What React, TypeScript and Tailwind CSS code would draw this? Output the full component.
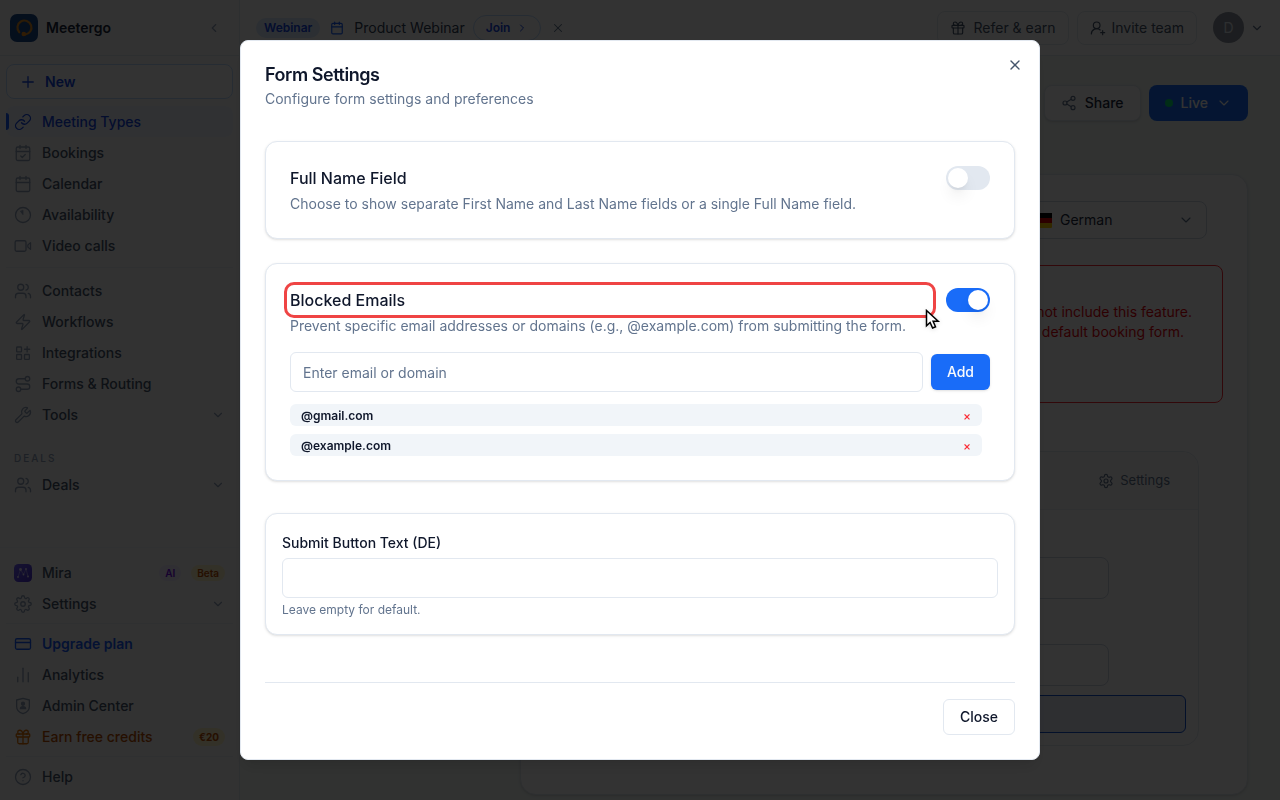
import type { ComponentType, ReactNode } from "react";
import { useState } from "react";
import {
  Calendar,
  CalendarCheck,
  ChartNoAxesColumn,
  ChevronDown,
  ChevronLeft,
  ChevronRight,
  CircleQuestionMark,
  CreditCard,
  Gift,
  Link,
  Plus,
  Route,
  Share2,
  UserRoundPlus,
  Users,
  Wrench,
  X,
  Zap,
} from "lucide-react";
import { FiSettings } from "react-icons/fi";

type IconProps = { className?: string; strokeWidth?: number };

function Svg({ className, strokeWidth = 1.75, children }: IconProps & { children: ReactNode }) {
  return (
    <svg
      viewBox="0 0 24 24"
      fill="none"
      stroke="currentColor"
      strokeWidth={strokeWidth}
      strokeLinecap="round"
      strokeLinejoin="round"
      className={className}
      aria-hidden="true"
    >
      {children}
    </svg>
  );
}

const ClockIcon = (p: IconProps) => (
  <Svg {...p}>
    <circle cx="12" cy="12" r="10" />
    <path d="M12 6v5.5L8.8 7.4z" fill="currentColor" strokeWidth={1} />
  </Svg>
);

const VideoIcon = (p: IconProps) => (
  <Svg {...p}>
    <rect x="1.5" y="5" width="14.5" height="14" rx="2" />
    <path d="M18.5 10.5l3.5-3v9l-3.5-3z" />
  </Svg>
);

const AppsIcon = (p: IconProps) => (
  <Svg {...p}>
    <rect x="3.5" y="4" width="6.500" height="6.500" rx="1" />
    <rect x="3.5" y="14" width="6.500" height="6.500" rx="1" />
    <rect x="14" y="14" width="6.500" height="6.500" rx="1" />
    <path d="M17.500 3.500v7M14 7h7" />
  </Svg>
);

const ShieldUserIcon = (p: IconProps) => (
  <Svg {...p}>
    <path d="M12 1.8 20.5 4v8.5c0 5-4 8.200-8.500 9.700-4.500-1.500-8.500-4.700-8.500-9.700V4z" />
    <circle cx="12" cy="9" r="2" fill="currentColor" />
    <path d="M8.500 15.500c0-3.600 7-3.600 7 0z" fill="currentColor" />
  </Svg>
);

const CogIcon = (p: IconProps) => (
  <Svg {...p}>
    <path d="M12.22 2h-.44a2 2 0 0 0-2 2v.18a2 2 0 0 1-1 1.73l-.43.25a2 2 0 0 1-2 0l-.15-.08a2 2 0 0 0-2.73.73l-.22.38a2 2 0 0 0 .73 2.73l.15.1a2 2 0 0 1 1 1.72v.51a2 2 0 0 1-1 1.74l-.15.09a2 2 0 0 0-.73 2.73l.22.38a2 2 0 0 0 2.73.73l.15-.08a2 2 0 0 1 2 0l.43.25a2 2 0 0 1 1 1.73V20a2 2 0 0 0 2 2h.44a2 2 0 0 0 2-2v-.18a2 2 0 0 1 1-1.73l.43-.25a2 2 0 0 1 2 0l.15.08a2 2 0 0 0 2.730-.73l.22-.39a2 2 0 0 0-.73-2.73l-.15-.08a2 2 0 0 1-1-1.74v-.5a2 2 0 0 1 1-1.74l.15-.09a2 2 0 0 0 .73-2.73l-.22-.38a2 2 0 0 0-2.73-.73l-.15.08a2 2 0 0 1-2 0l-.43-.25a2 2 0 0 1-1-1.73V4a2 2 0 0 0-2-2z" />
    <circle cx="12" cy="12" r="3" />
  </Svg>
);

const MiraIcon = ({ className }: IconProps) => (
  <svg viewBox="0 0 18 18" className={className} aria-hidden="true">
    <defs>
      <linearGradient id="mira" x1="0" y1="0" x2="1" y2="1">
        <stop offset="0" stopColor="#6d5cf6" />
        <stop offset="1" stopColor="#4a2fd0" />
      </linearGradient>
    </defs>
    <rect width="18" height="18" rx="4.500" fill="url(#mira)" />
    <path d="M4 13 6.500 5.500 9.500 10.500 12 5l2 7.500" fill="none" stroke="#a59cf5" strokeWidth="0.800" />
    <g fill="#e5e1ff">
      <circle cx="4" cy="13" r="0.900" />
      <circle cx="6.500" cy="5.500" r="1.400" />
      <circle cx="9.500" cy="10.500" r="0.900" />
      <circle cx="12" cy="5" r="0.900" />
      <circle cx="14" cy="12.500" r="0.900" />
    </g>
  </svg>
);

function Logo() {
  return (
    <svg viewBox="0 0 28 28" className="size-7 shrink-0" aria-hidden="true">
      <rect width="28" height="28" rx="7" fill="#1d4a8a" />
      <path
        d="M9.300 18.300a7 7 0 1 1 6 2.200"
        fill="none"
        stroke="#d98a24"
        strokeWidth="2.200"
        strokeLinecap="round"
      />
      <circle cx="13.800" cy="20" r="2.300" fill="#f08a18" />
    </svg>
  );
}

type Item = {
  label: string;
  icon: ComponentType<IconProps>;
  tone?: "active" | "upgrade" | "earn";
  expandable?: boolean;
  badges?: ReactNode;
};

const scheduling: Item[] = [
  { label: "Meeting Types", icon: Link, tone: "active" },
  { label: "Bookings", icon: CalendarCheck },
  { label: "Calendar", icon: Calendar },
  { label: "Availability", icon: ClockIcon },
  { label: "Video calls", icon: VideoIcon },
];

const workspace: Item[] = [
  { label: "Contacts", icon: Users },
  { label: "Workflows", icon: Zap },
  { label: "Integrations", icon: AppsIcon },
  { label: "Forms & Routing", icon: Route },
  { label: "Tools", icon: Wrench, expandable: true },
];

const account: Item[] = [
  { label: "Upgrade plan", icon: CreditCard, tone: "upgrade" },
  { label: "Analytics", icon: ChartNoAxesColumn },
  { label: "Admin Center", icon: ShieldUserIcon },
  {
    label: "Earn free credits",
    icon: Gift,
    tone: "earn",
    badges: (
      <span className="rounded-full bg-amber-100 px-1.5 text-[10px] leading-[18px] font-bold text-amber-700">
        €20
      </span>
    ),
  },
];

const rowTone = {
  active: "bg-blue-50 text-blue-700 font-medium",
  upgrade: "text-blue-600 font-semibold",
  earn: "text-amber-700 font-medium",
  plain: "text-slate-600 font-medium",
};

const iconTone = {
  active: "size-[18px] shrink-0 text-blue-700",
  upgrade: "size-[18px] shrink-0 text-blue-600",
  earn: "size-[18px] shrink-0 text-amber-600",
  plain: "size-[18px] shrink-0 text-slate-400",
};

function NavRow({ item }: { item: Item }) {
  const tone = item.tone ?? "plain";
  const Icon = item.icon;
  return (
    <a
      href="#"
      className={`relative flex h-[31px] items-center gap-[10px] rounded-lg pr-2 pl-2 text-sm ${rowTone[tone]}`}
    >
      {tone === "active" && (
        <span className="absolute top-[7px] left-0 h-[17px] w-[3px] rounded-r-full bg-blue-600" />
      )}
      <Icon className={iconTone[tone]} strokeWidth={1.75} />
      <span className="flex-1">{item.label}</span>
      {item.badges}
      {item.expandable && <ChevronDown className="size-3.5 text-slate-400" />}
    </a>
  );
}

function Sidebar() {
  return (
    <aside className="flex h-screen w-60 shrink-0 flex-col border-r border-slate-200 bg-[#fafafa]">
      <div className="flex h-14 shrink-0 items-center gap-2 border-b border-slate-200 px-[10px]">
        <Logo />
        <span className="flex-1 text-sm font-semibold text-slate-800">Meetergo</span>
        <ChevronLeft className="mr-2 size-3.5 text-slate-400" />
      </div>
      <nav className="flex flex-1 flex-col px-1.5 pt-2">
        <button
          type="button"
          className="mb-[7px] flex h-[35px] items-center gap-2 rounded-lg border border-blue-200 bg-white px-3 text-sm font-semibold text-blue-700"
        >
          <Plus className="size-[18px]" strokeWidth={1.75} />
          New
        </button>
        {scheduling.map((i) => (
          <NavRow key={i.label} item={i} />
        ))}
        <hr className="mt-1.5 mb-[7px] border-slate-200/60" />
        {workspace.map((i) => (
          <NavRow key={i.label} item={i} />
        ))}
        <p className="mt-5 mb-[3px] px-2 text-[10px] leading-4 font-medium tracking-[2px] text-slate-400">
          DEALS
        </p>
        <NavRow item={{ label: "Deals", icon: Users, expandable: true }} />
      </nav>
      <nav className="flex flex-col border-t border-slate-100 px-1.5 pt-[9px] pb-2">
        <NavRow
          item={{
            label: "Mira",
            icon: MiraIcon,
            badges: (
              <>
                <span className="rounded-full bg-violet-100 px-1.5 text-[10px] leading-4 font-semibold text-violet-700">
                  AI
                </span>
                <span className="rounded-full bg-amber-100 px-1.5 text-[10px] leading-4 font-semibold text-amber-700">
                  Beta
                </span>
              </>
            ),
          }}
        />
        <NavRow item={{ label: "Settings", icon: FiSettings, expandable: true }} />
        <hr className="my-1 border-slate-200/60" />
        {account.map((i) => (
          <NavRow key={i.label} item={i} />
        ))}
        <hr className="my-1 border-slate-200/60" />
        <NavRow item={{ label: "Help", icon: CircleQuestionMark }} />
      </nav>
    </aside>
  );
}

function TopBar() {
  return (
    <header className="flex h-14 shrink-0 items-center border-b border-slate-200 bg-white pr-4 pl-4">
      <span className="rounded-full bg-blue-100 px-2 text-xs leading-5 font-semibold text-blue-700">
        Webinar
      </span>
      <Calendar className="mr-2.5 ml-2.5 size-3.5 text-blue-600" />
      <span className="text-sm text-slate-700">Product Webinar</span>
      <button
        type="button"
        className="ml-2 flex h-[26px] items-center gap-1.5 rounded-full border border-blue-200 px-3 text-xs font-semibold text-blue-700"
      >
        Join
        <ChevronRight className="size-3" />
      </button>
      <button type="button" aria-label="Dismiss" className="ml-2.5 text-slate-500">
        <X className="size-3.5" strokeWidth={1.75} />
      </button>
      <div className="ml-auto flex items-center gap-2">
        <button
          type="button"
          className="flex h-[34px] items-center gap-2 rounded-lg border border-slate-200 px-3 text-sm text-slate-600"
        >
          <Gift className="size-4" strokeWidth={1.75} />
          Refer & earn
        </button>
        <button
          type="button"
          className="flex h-[34px] items-center gap-1.5 rounded-lg border border-slate-200 px-3 text-sm text-slate-600"
        >
          <UserRoundPlus className="size-4" strokeWidth={1.75} />
          Invite team
        </button>
        <button type="button" className="ml-2 flex items-center gap-1.5 text-slate-500">
          <span className="flex size-[31px] items-center justify-center rounded-full bg-[#8b929e] text-sm text-slate-200">
            D
          </span>
          <ChevronDown className="size-3.5" />
        </button>
      </div>
    </header>
  );
}

function GermanFlag() {
  return (
    <svg viewBox="0 0 20 15" className="h-[15px] w-5 shrink-0" aria-hidden="true">
      <rect width="20" height="15" rx="1" fill="#ffce00" />
      <rect width="20" height="10" fill="#dd0000" />
      <rect width="20" height="5" fill="#000" />
    </svg>
  );
}

function Editor() {
  return (
    <main className="flex flex-1 flex-col bg-[#f2f8f5] px-8 pt-[29px]">
      <div className="flex justify-end gap-2">
        <button
          type="button"
          className="flex h-9 items-center gap-2 rounded-lg border border-slate-200 bg-white px-4 text-sm font-medium text-slate-800 shadow-sm"
        >
          <Share2 className="size-4 text-slate-500" strokeWidth={1.75} />
          Share
        </button>
        <button
          type="button"
          className="flex h-9 items-center gap-2 rounded-lg bg-[#196cf8] px-4 text-sm font-medium text-white"
        >
          <span className="size-2 rounded-full bg-green-400" />
          Live
          <ChevronDown className="size-4" strokeWidth={1.75} />
        </button>
      </div>
      <section className="mt-[53px] ml-[248px] flex h-[621px] flex-col rounded-2xl border border-slate-200 bg-white px-6 pt-[26px] shadow-sm">
        <button
          type="button"
          className="mr-4 flex h-[38px] w-[188px] items-center gap-2 self-end rounded-lg border border-slate-300 px-3 text-left text-sm text-slate-800"
        >
          <GermanFlag />
          <span className="flex-1">German</span>
          <ChevronDown className="size-4 text-slate-500" strokeWidth={1.75} />
        </button>
        <div className="mt-[26px] flex h-[138px] flex-col items-end rounded-lg border border-red-500 px-[30px] pt-9 text-sm text-red-600">
          <p>not include this feature.</p>
          <p className="pr-2">the default booking form.</p>
        </div>
        <div className="mt-12 mr-6 flex h-[295px] flex-col rounded-2xl border border-slate-200">
          <div className="flex h-[58px] items-center justify-end gap-1.5 rounded-t-2xl border-b border-slate-200/60 bg-[#fbfbfb] pr-7 text-[13px] text-slate-500">
            <CogIcon className="size-4" />
            Settings
          </div>
          <input aria-label="First field" className="mt-[47px] mr-[89px] ml-6 h-[42px] rounded-lg border border-slate-300" />
          <input aria-label="Second field" className="mt-[45px] mr-[89px] ml-6 h-[42px] rounded-lg border border-slate-300" />
          <button
            type="button"
            aria-label="Submit"
            className="mt-[9px] mr-3 ml-6 h-[38px] shrink-0 rounded-md border border-[#0f4fd0] bg-[#e3e9f6]"
          />
        </div>
      </section>
    </main>
  );
}

function Toggle({ id, label, initial }: { id: string; label: string; initial: boolean }) {
  const [on, setOn] = useState(initial);
  return (
    <label htmlFor={id} className="flex h-6 w-11 shrink-0 rounded-full bg-slate-200 p-0.5 has-checked:bg-[#196cf8]">
      <input
        id={id}
        type="checkbox"
        role="switch"
        aria-label={label}
        checked={on}
        onChange={(e) => setOn(e.target.checked)}
        className="size-5 appearance-none rounded-full bg-white shadow-lg checked:ml-5"
      />
    </label>
  );
}

function Pointer() {
  return (
    <svg
      viewBox="0 0 16 22"
      className="absolute -right-2 -bottom-4 h-[22px] w-4 drop-shadow-sm"
      aria-hidden="true"
    >
      <path
        d="M1.500 1.500v15.200l3.600-3.300 2.500 5.600 2.900-1.200-2.400-5.500h5.100z"
        fill="#fff"
        stroke="#000"
        strokeWidth="1.500"
      />
    </svg>
  );
}

function FormSettingsDialog() {
  const [blocked, setBlocked] = useState(["@gmail.com", "@example.com"]);
  const card = "rounded-xl border border-slate-200 bg-white shadow-sm";
  return (
    <div className="fixed inset-0 flex items-center justify-center bg-black/80">
      <div
        role="dialog"
        aria-modal="true"
        aria-labelledby="dialog-title"
        className="relative flex h-[90vh] w-full max-w-[800px] flex-col rounded-lg border border-slate-200 bg-white p-6 text-sm text-slate-900 shadow-lg"
      >
        <button type="button" aria-label="Close dialog" className="absolute top-4 right-4 text-slate-600">
          <X className="size-4" />
        </button>
        <h2 id="dialog-title" className="text-lg leading-5 font-semibold tracking-tight">
          Form Settings
        </h2>
        <p className="mt-1 text-slate-500">Configure form settings and preferences</p>

        <section className={`mt-8 flex items-start gap-4 p-6 ${card}`}>
          <div className="flex-1">
            <h3 className="text-base font-medium">Full Name Field</h3>
            <p className="mt-1 text-slate-500">
              Choose to show separate First Name and Last Name fields or a single Full Name field.
            </p>
          </div>
          <Toggle id="full-name" label="Full Name Field" initial={false} />
        </section>

        <section className={`mt-6 p-6 ${card}`}>
          <div className="flex items-start gap-4">
            <div className="flex-1">
              <div className="relative">
                <h3 className="text-base font-medium">Blocked Emails</h3>
                <div className="absolute -inset-1.5 rounded-[10px] border-3 border-[#ef4444]">
                  <Pointer />
                </div>
              </div>
              <p className="mt-1 text-slate-500">
                Prevent specific email addresses or domains (e.g., @example.com) from submitting the form.
              </p>
            </div>
            <Toggle id="blocked" label="Blocked Emails" initial />
          </div>
          <div className="mt-4 flex items-center gap-2">
            <input
              aria-label="Email or domain"
              placeholder="Enter email or domain"
              className="h-10 flex-1 rounded-md border border-slate-200 px-3 placeholder:text-slate-500"
            />
            <button type="button" className="h-9 rounded-md bg-[#196cf8] px-4 font-medium text-slate-50 shadow-sm">
              Add
            </button>
          </div>
          <ul className="mt-3 mr-2 flex flex-col gap-2">
            {blocked.map((entry) => (
              <li
                key={entry}
                className="flex items-center justify-between rounded-md bg-slate-100 px-[11px] pt-1 pb-0.5 text-xs font-semibold"
              >
                {entry}
                <button
                  type="button"
                  aria-label={`Remove ${entry}`}
                  onClick={() => setBlocked(blocked.filter((b) => b !== entry))}
                  className="font-medium text-red-500"
                >
                  ×
                </button>
              </li>
            ))}
          </ul>
        </section>

        <section className={`mt-8 p-4 ${card}`}>
          <label htmlFor="submit-text" className="block pb-0.5 leading-[26px] font-medium">
            Submit Button Text (DE)
          </label>
          <input id="submit-text" className="h-10 w-full rounded-md border border-slate-200 px-3" />
          <p className="mt-1 text-xs text-slate-500">Leave empty for default.</p>
        </section>

        <footer className="mt-auto flex justify-end border-t border-slate-200 pt-4">
          <button type="button" className="h-9 rounded-md border border-slate-200 px-4 font-medium">
            Close
          </button>
        </footer>
      </div>
    </div>
  );
}

export default function App() {
  return (
    <div className="flex h-screen overflow-hidden font-[Inter,sans-serif]">
      <Sidebar />
      <div className="flex min-w-0 flex-1 flex-col">
        <TopBar />
        <Editor />
      </div>
      <FormSettingsDialog />
    </div>
  );
}
